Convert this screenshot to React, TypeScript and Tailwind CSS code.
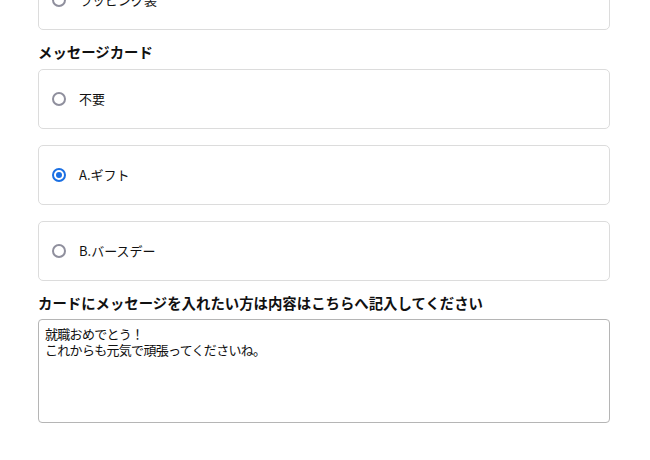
import React from "react";

const font = { fontFamily: '"Noto Sans CJK JP", "Noto Sans", sans-serif' };

function Radio({ checked }: { checked?: boolean }) {
  if (checked) {
    return (
      <span className="flex h-[14px] w-[14px] items-center justify-center rounded-full border-2 border-[#1a6fe3] bg-white">
        <span className="h-[6px] w-[6px] rounded-full bg-[#1a6fe3]" />
      </span>
    );
  }
  return <span className="block h-[14px] w-[14px] rounded-full border-2 border-[#8f8f9d] bg-white" />;
}

function Option({ label, checked, className = "" }: { label: string; checked?: boolean; className?: string }) {
  return (
    <label className={`flex h-[60px] items-center rounded-[5px] border border-[#dcdcdc] bg-white pl-[13px] ${className}`}>
      <Radio checked={checked} />
      <span className="ml-[13px] text-[13px] leading-5 text-[#111]">{label}</span>
    </label>
  );
}

export default function App() {
  return (
    <div className="h-[460px] w-[650px] overflow-hidden bg-white" style={font}>
      <div className="ml-[38px] w-[572px]">
        <Option label="ラッピング袋" className="-mt-[30px]" />
        <div className="mb-[7px] mt-[12px] h-5 text-[14.4px] font-bold leading-5 text-[#111]">メッセージカード</div>
        <div className="flex flex-col gap-4">
          <Option label="不要" />
          <Option label="A.ギフト" checked />
          <Option label="B.バースデー" />
        </div>
        <div className="mb-[6px] mt-[12px] h-5 whitespace-nowrap text-[14.4px] font-bold leading-5 text-[#111]">
          カードにメッセージを入れたい方は内容はこちらへ記入してください
        </div>
        <textarea
          className="block h-[104px] w-[572px] resize-none rounded-[4px] border border-[#b5b5b5] px-[6px] pt-[6px] text-[13px] leading-4 tracking-[-0.7px] text-[#111] outline-none"
          style={font}
          defaultValue={"就職おめでとう！\nこれからも元気で頑張ってくださいね。"}
        />
      </div>
    </div>
  );
}
